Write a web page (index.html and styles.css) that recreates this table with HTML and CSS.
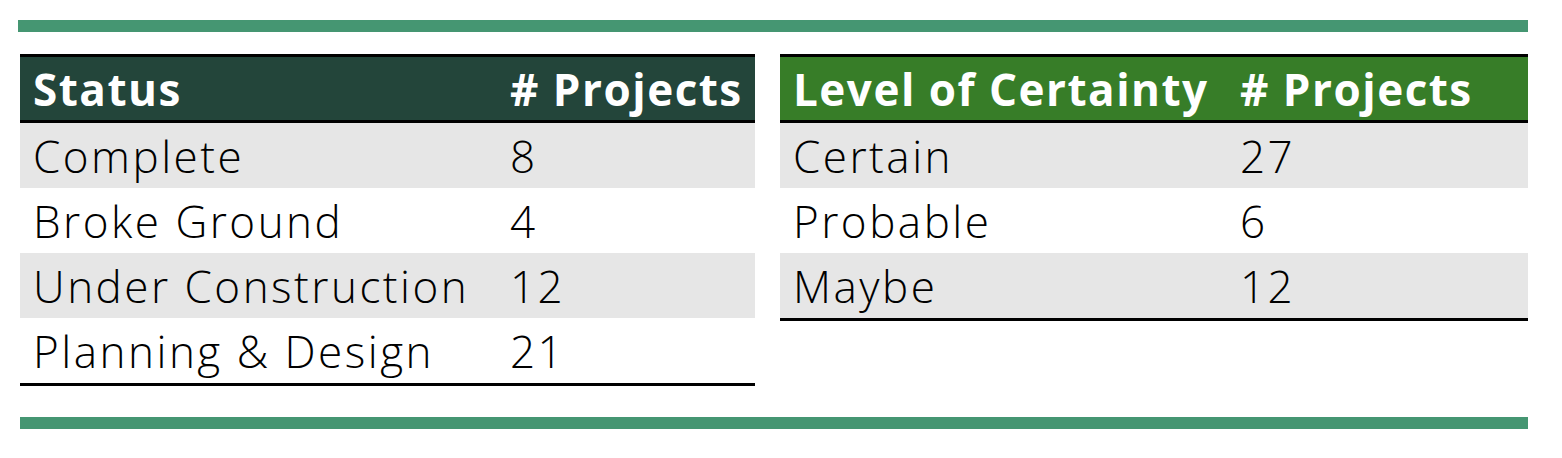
FILE: index.html
```html
<!DOCTYPE html>
<html>
<head>
<meta charset="utf-8">
<link rel="stylesheet" href="styles.css">
</head>
<body>
<div class="page">
  <div class="bar"></div>
  <div class="tables">
    <table class="tbl tbl-status">
      <thead>
        <tr><th class="c1">Status</th><th class="c2"># Projects</th></tr>
      </thead>
      <tbody>
        <tr class="alt"><td>Complete</td><td>8</td></tr>
        <tr><td>Broke Ground</td><td>4</td></tr>
        <tr class="alt"><td>Under Construction</td><td>12</td></tr>
        <tr><td>Planning &amp; Design</td><td>21</td></tr>
      </tbody>
    </table>
    <table class="tbl tbl-cert">
      <thead>
        <tr><th class="c1">Level of Certainty</th><th class="c2"># Projects</th></tr>
      </thead>
      <tbody>
        <tr class="alt"><td>Certain</td><td>27</td></tr>
        <tr><td>Probable</td><td>6</td></tr>
        <tr class="alt"><td>Maybe</td><td>12</td></tr>
      </tbody>
    </table>
  </div>
  <div class="bar bar-bottom"></div>
</div>
</body>
</html>
```
FILE: styles.css
```css
html, body {
  margin: 0;
  padding: 0;
  background: #ffffff;
}
.page {
  padding: 20px 34px 0 18px;
  display: flex;
  flex-direction: column;
  font-family: "Open Sans", "Liberation Sans", sans-serif;
}
.bar {
  height: 12px;
  background: #459672;
}
.bar-bottom {
  margin-left: 2px;
  margin-top: 31px;
}
.tables {
  display: flex;
  align-items: flex-start;
  gap: 25px;
  margin-top: 22px;
  margin-left: 2px;
}
.tbl {
  border-collapse: collapse;
  border-spacing: 0;
  table-layout: fixed;
}
.tbl-status { width: 735px; }
.tbl-cert { width: 748px; }
.tbl-status .c1 { width: 464px; }
.tbl-cert .c1 { width: 434px; }
.tbl th {
  height: 63px;
  padding: 0 0 0 13px;
  text-align: left;
  color: #ffffff;
  font-weight: 700;
  font-size: 44px;
  line-height: 1;
  letter-spacing: 1.5px;
  white-space: nowrap;
  border-top: 3px solid #000;
  border-bottom: 3px solid #000;
  box-shadow: 0 -1px 0 #b0b0b0;
}
.tbl-status th { background: #23453a; }
.tbl-cert th { background: #377d28; }
.tbl td {
  height: 65px;
  padding: 0 0 0 13px;
  font-size: 44px;
  font-weight: 300;
  line-height: 1;
  color: #000;
  letter-spacing: 2.5px;
  white-space: nowrap;
}
.tbl tr.alt td { background: #e6e6e6; }
.tbl tbody tr:last-child td { border-bottom: 3px solid #000; }
```
